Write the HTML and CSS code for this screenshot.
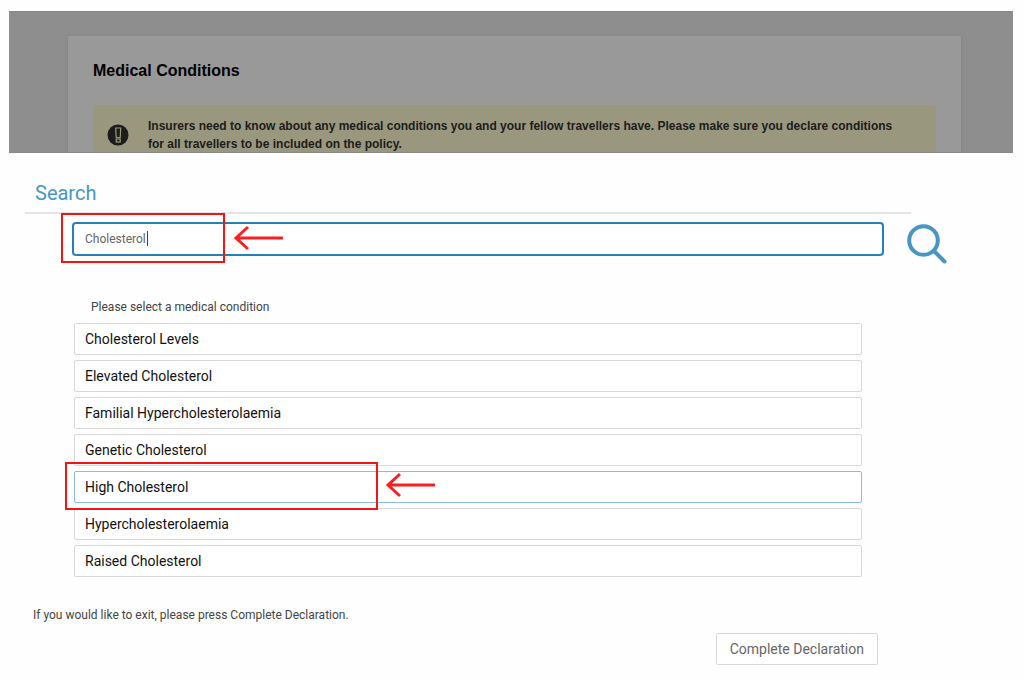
FILE: index.html
```html
<!DOCTYPE html>
<html lang="en">
<head>
  <meta charset="UTF-8">
  <title>Medical Conditions</title>
  <meta name="viewport" content="width=device-width">
  <link rel="stylesheet" href="styles.css">
</head>
<body>
  <div class="backdrop">
    <div class="card">
      <h1>Medical Conditions</h1>
      <div class="notice">
        <svg class="notice-icon" viewBox="0 0 22 22" aria-hidden="true">
          <circle cx="11" cy="11" r="10.5" fill="#1c1c1c"/>
          <path d="M8.700 4H13.700L13.200 13.500H9.200Z" fill="#1c1c1c" stroke="#99987f" stroke-width="1.200"/>
          <rect x="9.200" y="15" width="4" height="3" fill="#1c1c1c" stroke="#99987f" stroke-width="1.200"/>
        </svg>
        <p>Insurers need to know about any medical conditions you and your fellow travellers have. Please make sure you declare conditions for all travellers to be included on the policy.</p>
      </div>
    </div>
  </div>

  <main class="panel">
    <h2><label for="search">Search</label></h2>
    <div class="search-row">
      <div class="search-field">
        <input type="text" id="search" value="Cholesterol">
        <span class="caret"></span>
        <span class="highlight"></span>
        <svg class="arrow" viewBox="0 0 50 26" aria-hidden="true">
          <path d="M3 13H50M15 2L3 13L15 24"/>
        </svg>
      </div>
      <button class="search-button" aria-label="Search">
        <svg viewBox="0 0 40 40" aria-hidden="true">
          <circle cx="16.500" cy="16.500" r="14.300"/>
          <path d="M27 27L37.500 37.500"/>
        </svg>
      </button>
    </div>

    <p class="hint">Please select a medical condition</p>
    <ul class="results">
      <li><button>Cholesterol Levels</button></li>
      <li><button>Elevated Cholesterol</button></li>
      <li><button>Familial Hypercholesterolaemia</button></li>
      <li><button>Genetic Cholesterol</button></li>
      <li class="active">
        <button>High Cholesterol</button>
        <span class="highlight"></span>
        <svg class="arrow" viewBox="0 0 50 26" aria-hidden="true">
          <path d="M3 13H50M15 2L3 13L15 24"/>
        </svg>
      </li>
      <li><button>Hypercholesterolaemia</button></li>
      <li><button>Raised Cholesterol</button></li>
    </ul>

    <p class="exit">If you would like to exit, please press Complete Declaration.</p>
    <div class="actions">
      <button class="complete">Complete Declaration</button>
    </div>
  </main>
</body>
</html>
```
FILE: styles.css
```css
* {
  box-sizing: border-box;
}

body {
  margin: 0;
  padding: 11px 11px 0 9px;
  background: #fefefe;
  font-family: Roboto, "Liberation Sans", sans-serif;
  font-size: 12px;
  color: #444;
}

h1, h2, p, ul {
  margin: 0;
  padding: 0;
}

button {
  font-family: inherit;
  cursor: pointer;
}

.backdrop {
  height: 142px;
  padding: 24px 52px 0 59px;
  overflow: hidden;
  background: #8e8e8e;
  border: 1px solid #888;
  border-width: 1px 0;
}

.card {
  padding: 25px 25px 24px;
  background: #999;
  box-shadow: 0 0 4px #808080;
  font-family: "Liberation Sans", Arial, sans-serif;
  color: #000;
}

h1 {
  font-size: 16px;
  line-height: 20px;
}

.notice {
  display: flex;
  gap: 19px;
  margin-top: 24px;
  padding: 12px 30px 12px 14px;
  background: #99987f;
  border-radius: 2px;
  color: #1c1c1c;
  font-weight: bold;
  line-height: 18px;
}

.notice-icon {
  flex: none;
  width: 22px;
  height: 22px;
  margin-top: 7px;
}

.panel {
  padding: 28px 0 14px;
}

h2 {
  margin: 0 102px 0 16px;
  padding: 0 10px 7px;
  border-bottom: 2px solid #e4e4e4;
  color: #4796c4;
  font-size: 20px;
  font-weight: normal;
  line-height: 24px;
}

.search-row {
  display: flex;
  gap: 23px;
  padding: 8px 66px 0 63px;
}

.search-field {
  position: relative;
  flex: 1;
}

.search-field input {
  display: block;
  width: 100%;
  height: 34px;
  padding: 0 11px;
  border: 2px solid #2580b3;
  border-radius: 4px;
  background: #fff;
  outline: 0;
  color: #666;
  font: inherit;
}

.caret {
  position: absolute;
  top: 9px;
  left: 75px;
  width: 1px;
  height: 15px;
  background: #444;
}

.highlight {
  position: absolute;
  border: 2px solid #f41414;
  pointer-events: none;
}

.search-field .highlight {
  top: -9px;
  left: -11px;
  width: 164px;
  height: 50px;
}

.arrow {
  position: absolute;
  width: 50px;
  height: 26px;
  fill: none;
  stroke: #fb2020;
  stroke-width: 3;
}

.search-field .arrow {
  top: 3px;
  left: 161px;
}

.search-button {
  flex: none;
  width: 40px;
  height: 40px;
  margin-top: 2px;
  padding: 0;
  border: 0;
  background: none;
}

.search-button svg {
  display: block;
  fill: none;
  stroke: #4796c4;
  stroke-width: 4;
  stroke-linecap: round;
}

.hint {
  margin: 35px 0 8px 82px;
  line-height: 16px;
}

.results {
  display: grid;
  gap: 5px;
  margin: 0 151px 0 65px;
  list-style: none;
}

.results li {
  position: relative;
}

.results button {
  display: block;
  width: 100%;
  height: 32px;
  padding: 0 10px;
  border: 1px solid #d8d8d8;
  border-radius: 2px;
  background: #fff;
  color: #111;
  font-size: 14px;
  text-align: left;
}

.results .active button {
  border-color: #8bbcd6;
}

.active .highlight {
  z-index: 1;
  top: -9px;
  left: -9px;
  width: 313px;
  height: 48px;
}

.active .arrow {
  top: 1px;
  left: 311px;
}

.exit {
  margin: 30px 24px 10px;
  line-height: 16px;
}

.actions {
  display: flex;
  justify-content: flex-end;
  padding-right: 135px;
}

.complete {
  height: 32px;
  padding: 0 13px;
  border: 1px solid #d8d8d8;
  border-radius: 2px;
  background: #fff;
  color: #666;
  font-size: 14px;
}
```
